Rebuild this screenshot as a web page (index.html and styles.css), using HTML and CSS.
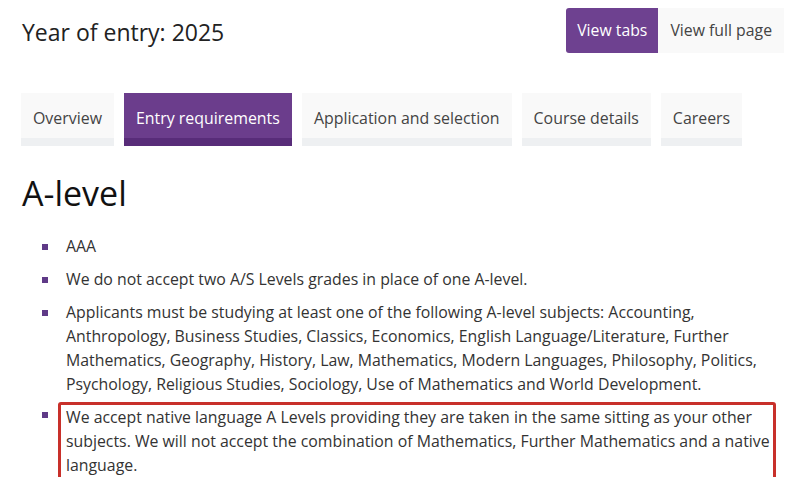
FILE: index.html
```html
<!DOCTYPE html>
<html lang="en">
<head>
<meta charset="utf-8">
<title>Year of entry: 2025</title>
<link rel="stylesheet" href="styles.css">
</head>
<body>
<div class="page">
  <header class="top">
    <h2 class="year">Year of entry: 2025</h2>
    <div class="view-switch">
      <a class="view-btn active">View tabs</a>
      <a class="view-btn">View full page</a>
    </div>
  </header>
  <nav class="tabs">
    <a class="tab">Overview</a>
    <a class="tab active">Entry requirements</a>
    <a class="tab">Application and selection</a>
    <a class="tab">Course details</a>
    <a class="tab">Careers</a>
  </nav>
  <h1 class="heading">A-level</h1>
  <ul class="reqs">
    <li>AAA</li>
    <li>We do not accept two A/S Levels grades in place of one A-level.</li>
    <li>Applicants must be studying at least one of the following A-level subjects: Accounting, Anthropology, Business Studies, Classics, Economics, English Language/Literature, Further Mathematics, Geography, History, Law, Mathematics, Modern Languages, Philosophy, Politics, Psychology, Religious Studies, Sociology, Use of Mathematics and World Development.</li>
    <li><div class="highlight">We accept native language A Levels providing they are taken in the same sitting as your other subjects. We will not accept the combination of Mathematics, Further Mathematics and a native language.</div></li>
  </ul>
</div>
</body>
</html>
```
FILE: styles.css
```css
html, body {
  margin: 0;
  padding: 0;
  background: #ffffff;
}
body {
  font-family: "Open Sans", "Liberation Sans", sans-serif;
  color: #333333;
  overflow: hidden;
}
.page {
  padding: 8px 16px 0 22px;
}
.top {
  display: flex;
  justify-content: space-between;
  align-items: flex-start;
}
.year {
  margin: 8px 0 0 0;
  font-size: 23px;
  font-weight: 400;
  line-height: 32px;
  color: #222222;
}
.view-switch {
  display: flex;
}
.view-btn {
  display: block;
  height: 45px;
  line-height: 45px;
  padding: 0 12px;
  font-size: 15.8px;
  color: #444444;
  background: #f9f9f9;
}
.view-btn.active {
  background: #6e4190;
  color: #ffffff;
  border-radius: 3px 0 0 3px;
  padding: 0 11px;
}
.tabs {
  display: flex;
  gap: 10px;
  margin: 40px 0 0 -1px;
}
.tab {
  display: block;
  padding: 13px 12px 8px;
  line-height: 24px;
  font-size: 15.92px;
  color: #444444;
  background: #f9f9f9;
  border-bottom: 8px solid #eef0f2;
}
.tab.active {
  background: #6b3d8c;
  color: #ffffff;
  border-bottom-color: #582c79;
}
.heading {
  margin: 25px 0 0 0;
  font-size: 34px;
  font-weight: 400;
  line-height: 44px;
  color: #111111;
}
.reqs {
  list-style: none;
  margin: 19px 0 0 0;
  padding: 0 0 0 44px;
  width: 710px;
}
.reqs li {
  position: relative;
  font-size: 15.85px;
  line-height: 24px;
  margin-bottom: 9px;
}
.reqs li::before {
  content: "";
  position: absolute;
  left: -24px;
  top: 10px;
  width: 6px;
  height: 6px;
  background: #5f3a87;
}
.highlight {
  margin: -3px 0 0 -8px;
  padding: 0 0 0 5px;
  border: 3px solid #c8302a;
  border-radius: 3px;
}
```
